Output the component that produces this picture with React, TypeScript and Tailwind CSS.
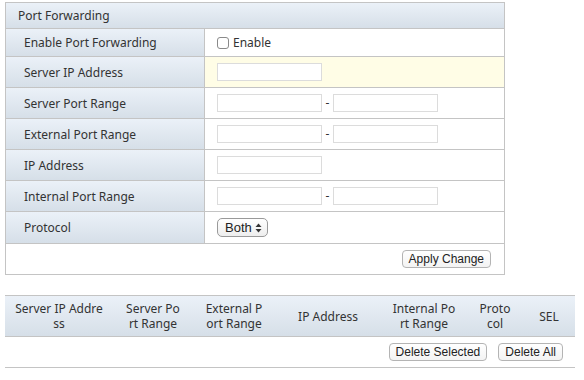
import React from "react";

const rows = [
	{ label: "Server IP Address", kind: "single", hl: true },
	{ label: "Server Port Range", kind: "range" },
	{ label: "External Port Range", kind: "range" },
	{ label: "IP Address", kind: "single" },
	{ label: "Internal Port Range", kind: "range" },
];

const Field = () => (
	<input
		type="text"
		className="w-[105px] h-[18px] border border-[#dcdcdc] bg-white outline-none"
	/>
);

const Btn = ({ children }: { children: React.ReactNode }) => (
	<button className="h-[18px] px-[6px] rounded-[4px] border border-[#b4b4b4] bg-gradient-to-b from-white to-[#f3f3f3] text-[12px] leading-[15px] text-[#222] font-['Liberation_Sans',Arial,sans-serif]">
		{children}
	</button>
);

const cols = [
	{ t: "Server IP Address", w: "w-[108px] px-[10px]" },
	{ t: "Server Port Range", w: "w-[80px] px-[12px]" },
	{ t: "External Port Range", w: "w-[82px] px-[10px]" },
	{ t: "IP Address", w: "w-[106px] px-[10px]" },
	{ t: "Internal Port Range", w: "w-[86px] px-[10px]" },
	{ t: "Protocol", w: "w-[56px] px-[10px]" },
	{ t: "SEL", w: "flex-1 px-[10px]" },
];

export default function App() {
	return (
		<div className="w-[584px] h-[380px] bg-white pt-[2px] pl-[5px] text-[12px] text-[#333] font-['Noto_Sans',sans-serif]">
			{/* Settings table */}
			<div className="w-[500px] border border-[#c4c4c4]">
				<div className="h-[26px] flex items-center pl-[12px] bg-gradient-to-b from-[#ebf1f8] to-[#d6dfe8] border-b border-[#c4c4c4]">
					Port Forwarding
				</div>
				<div className="flex h-[28px] border-b border-[#c4c4c4]">
					<div className="w-[199px] flex items-center pl-[18px] pt-[1px] bg-gradient-to-b from-[#ebf1f8] to-[#d6dfe8] border-r border-[#c4c4c4]">
						Enable Port Forwarding
					</div>
					<label className="flex items-center pl-[12px] gap-[4px] pt-[1px]">
						<span className="w-[12px] h-[12px] rounded-[3px] border border-[#8a8a8a] bg-white" />
						Enable
					</label>
				</div>
				{rows.map((r) => (
					<div key={r.label} className="flex h-[31px] border-b border-[#c4c4c4]">
						<div className="w-[199px] flex items-center pl-[18px] pt-[1px] bg-gradient-to-b from-[#ebf1f8] to-[#d6dfe8] border-r border-[#c4c4c4]">
							{r.label}
						</div>
						<div className={`flex-1 flex items-center pl-[12px] ${r.hl ? "bg-[#fffde6]" : ""}`}>
							<Field />
							{r.kind === "range" && (
								<>
									<span className="w-[11px] text-center">-</span>
									<Field />
								</>
							)}
						</div>
					</div>
				))}
				<div className="flex h-[32px] border-b border-[#c4c4c4]">
					<div className="w-[199px] flex items-center pl-[18px] pt-[1px] bg-gradient-to-b from-[#ebf1f8] to-[#d6dfe8] border-r border-[#c4c4c4]">
						Protocol
					</div>
					<div className="flex-1 flex items-center pl-[12px]">
						<div className="h-[19px] w-[51px] rounded-[5px] border border-[#9a9a9a] bg-gradient-to-b from-white to-[#eeeeee] flex items-center pl-[7px] gap-[3px] text-[13px] text-[#222] font-['Liberation_Sans',Arial,sans-serif]">
							Both
							<svg width="7" height="10" viewBox="0 0 7 10">
								<path d="M3.5 0.5 L6.5 4 H0.5 Z" fill="#333" />
								<path d="M3.5 9.5 L6.5 6 H0.5 Z" fill="#333" />
							</svg>
						</div>
					</div>
				</div>
				<div className="h-[30px] flex items-center justify-end pr-[13px]">
					<Btn>Apply Change</Btn>
				</div>
			</div>

			{/* List table */}
			<div className="w-[570px] mt-[20px] border-t border-[#c4c4c4]">
				<div className="flex h-[41px] bg-gradient-to-b from-[#ebf1f8] to-[#d6dfe8] border-b border-[#c4c4c4]">
					{cols.map((c) => (
						<div
							key={c.t}
							className={`${c.w} flex items-center justify-center text-center leading-[15px] break-all`}
						>
							{c.t}
						</div>
					))}
				</div>
				<div className="h-[31px] flex items-center justify-end gap-[11px] pr-[12px] border-b border-[#c4c4c4]">
					<Btn>Delete Selected</Btn>
					<Btn>Delete All</Btn>
				</div>
			</div>
		</div>
	);
}
